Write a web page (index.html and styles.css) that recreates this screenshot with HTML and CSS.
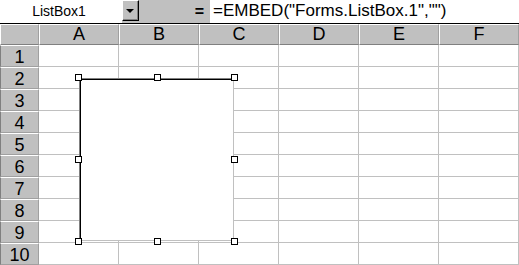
FILE: index.html
```html
<!DOCTYPE html>
<html lang="en">
<head>
    <meta charset="UTF-8">
    <title>ListBox1</title>
    <link rel="stylesheet" href="styles.css">
</head>
<body>
    <div class="formula-bar">
        <div class="name-box">ListBox1</div>
        <div class="drop-btn"><span class="arrow"></span></div>
        <div class="equals">=</div>
        <div class="formula">=EMBED("Forms.ListBox.1","")</div>
    </div>

    <div class="sheet">
        <div class="grid">
            <div class="hdr corner"></div>
            <div class="hdr col">A</div>
            <div class="hdr col">B</div>
            <div class="hdr col">C</div>
            <div class="hdr col">D</div>
            <div class="hdr col">E</div>
            <div class="hdr col">F</div>
        </div>
        <div class="grid" id="rows"></div>

        <!-- embedded control, sits over the cells -->
        <div class="listbox-frame">
            <div class="listbox"></div>
            <span class="handle tl"></span>
            <span class="handle tc"></span>
            <span class="handle tr"></span>
            <span class="handle ml"></span>
            <span class="handle mr"></span>
            <span class="handle bl"></span>
            <span class="handle bc"></span>
            <span class="handle br"></span>
        </div>
    </div>

    <script>
        const rows = document.getElementById('rows');
        for (let r = 1; r <= 10; r++) {
            let html = `<div class="hdr row">${r}</div>`;
            for (let c = 0; c < 6; c++) {
                html += '<div class="cell"></div>';
            }
            rows.insertAdjacentHTML('beforeend', html);
        }
    </script>
</body>
</html>
```

FILE: styles.css
```css
body {
    margin: 0;
    width: 519px;
    height: 265px;
    overflow: hidden;
    background: #fff;
    font-family: "Liberation Sans", Arial, sans-serif;
    color: #000;
}
.formula-bar {
    display: flex;
    height: 23px;
    border-bottom: 1px solid #000;
    background: #c0c0c0;
}
.name-box {
    width: 122px;
    background: #fff;
    font-size: 14px;
    line-height: 22px;
    text-align: center;
    padding-right: 4px;
    box-sizing: border-box;
}
.drop-btn {
    width: 17px;
    height: 21px;
    box-sizing: border-box;
    background: #c0c0c0;
    border-top: 1px solid #fff;
    border-left: 1px solid #fff;
    border-right: 1px solid #000;
    border-bottom: 1px solid #000;
    box-shadow: inset -1px -1px 0 #808080;
    display: flex;
    align-items: center;
    justify-content: center;
}
.arrow {
    width: 0;
    height: 0;
    border-left: 4px solid transparent;
    border-right: 4px solid transparent;
    border-top: 4px solid #000;
    margin-right: 1px;
}
.equals {
    width: 71px;
    text-align: right;
    padding-right: 6px;
    box-sizing: border-box;
    font-size: 16px;
    font-weight: bold;
    line-height: 23px;
}
.formula {
    flex: 1;
    background: #fff;
    font-size: 17px;
    line-height: 22px;
    padding-left: 3px;
    white-space: nowrap;
}
.sheet {
    position: relative;
}
.grid {
    display: grid;
    grid-template-columns: 39px repeat(6, 80px);
}
.hdr {
    background: #c0c0c0;
    box-sizing: border-box;
    border-left: 1px solid #fff;
    border-top: 1px solid #fff;
    border-right: 1px solid #a0a0a0;
    text-align: center;
    font-size: 18px;
}
.hdr.corner,
.hdr.col {
    height: 21px;
    line-height: 19px;
    border-bottom: 1px solid #808080;
}
.hdr.row {
    height: 22px;
    line-height: 22px;
    border-top: 1px solid #fff;
    border-bottom: 1px solid #a0a0a0;
    border-left: 1px solid #808080;
}
.cell {
    height: 22px;
    box-sizing: border-box;
    border-right: 1px solid #c0c0c0;
    border-bottom: 1px solid #c0c0c0;
}
.listbox-frame {
    position: absolute;
    left: 79px;
    top: 54px;
    width: 155px;
    height: 163px;
}
.listbox {
    width: 100%;
    height: 100%;
    box-sizing: border-box;
    background: #fff;
    border-top: 1px solid #808080;
    border-left: 1px solid #808080;
    border-right: 1px solid #c0c0c0;
    border-bottom: 1px solid #c0c0c0;
    box-shadow: inset 1px 1px 0 #000;
}
.handle {
    position: absolute;
    width: 7px;
    height: 7px;
    box-sizing: border-box;
    background: #fff;
    border: 1px solid #000;
}
.tl { left: -4px; top: -4px; }
.tc { left: 75px; top: -4px; }
.tr { left: 152px; top: -4px; }
.ml { left: -4px; top: 78px; }
.mr { left: 152px; top: 78px; }
.bl { left: -4px; top: 160px; }
.bc { left: 75px; top: 160px; }
.br { left: 152px; top: 160px; }
```
